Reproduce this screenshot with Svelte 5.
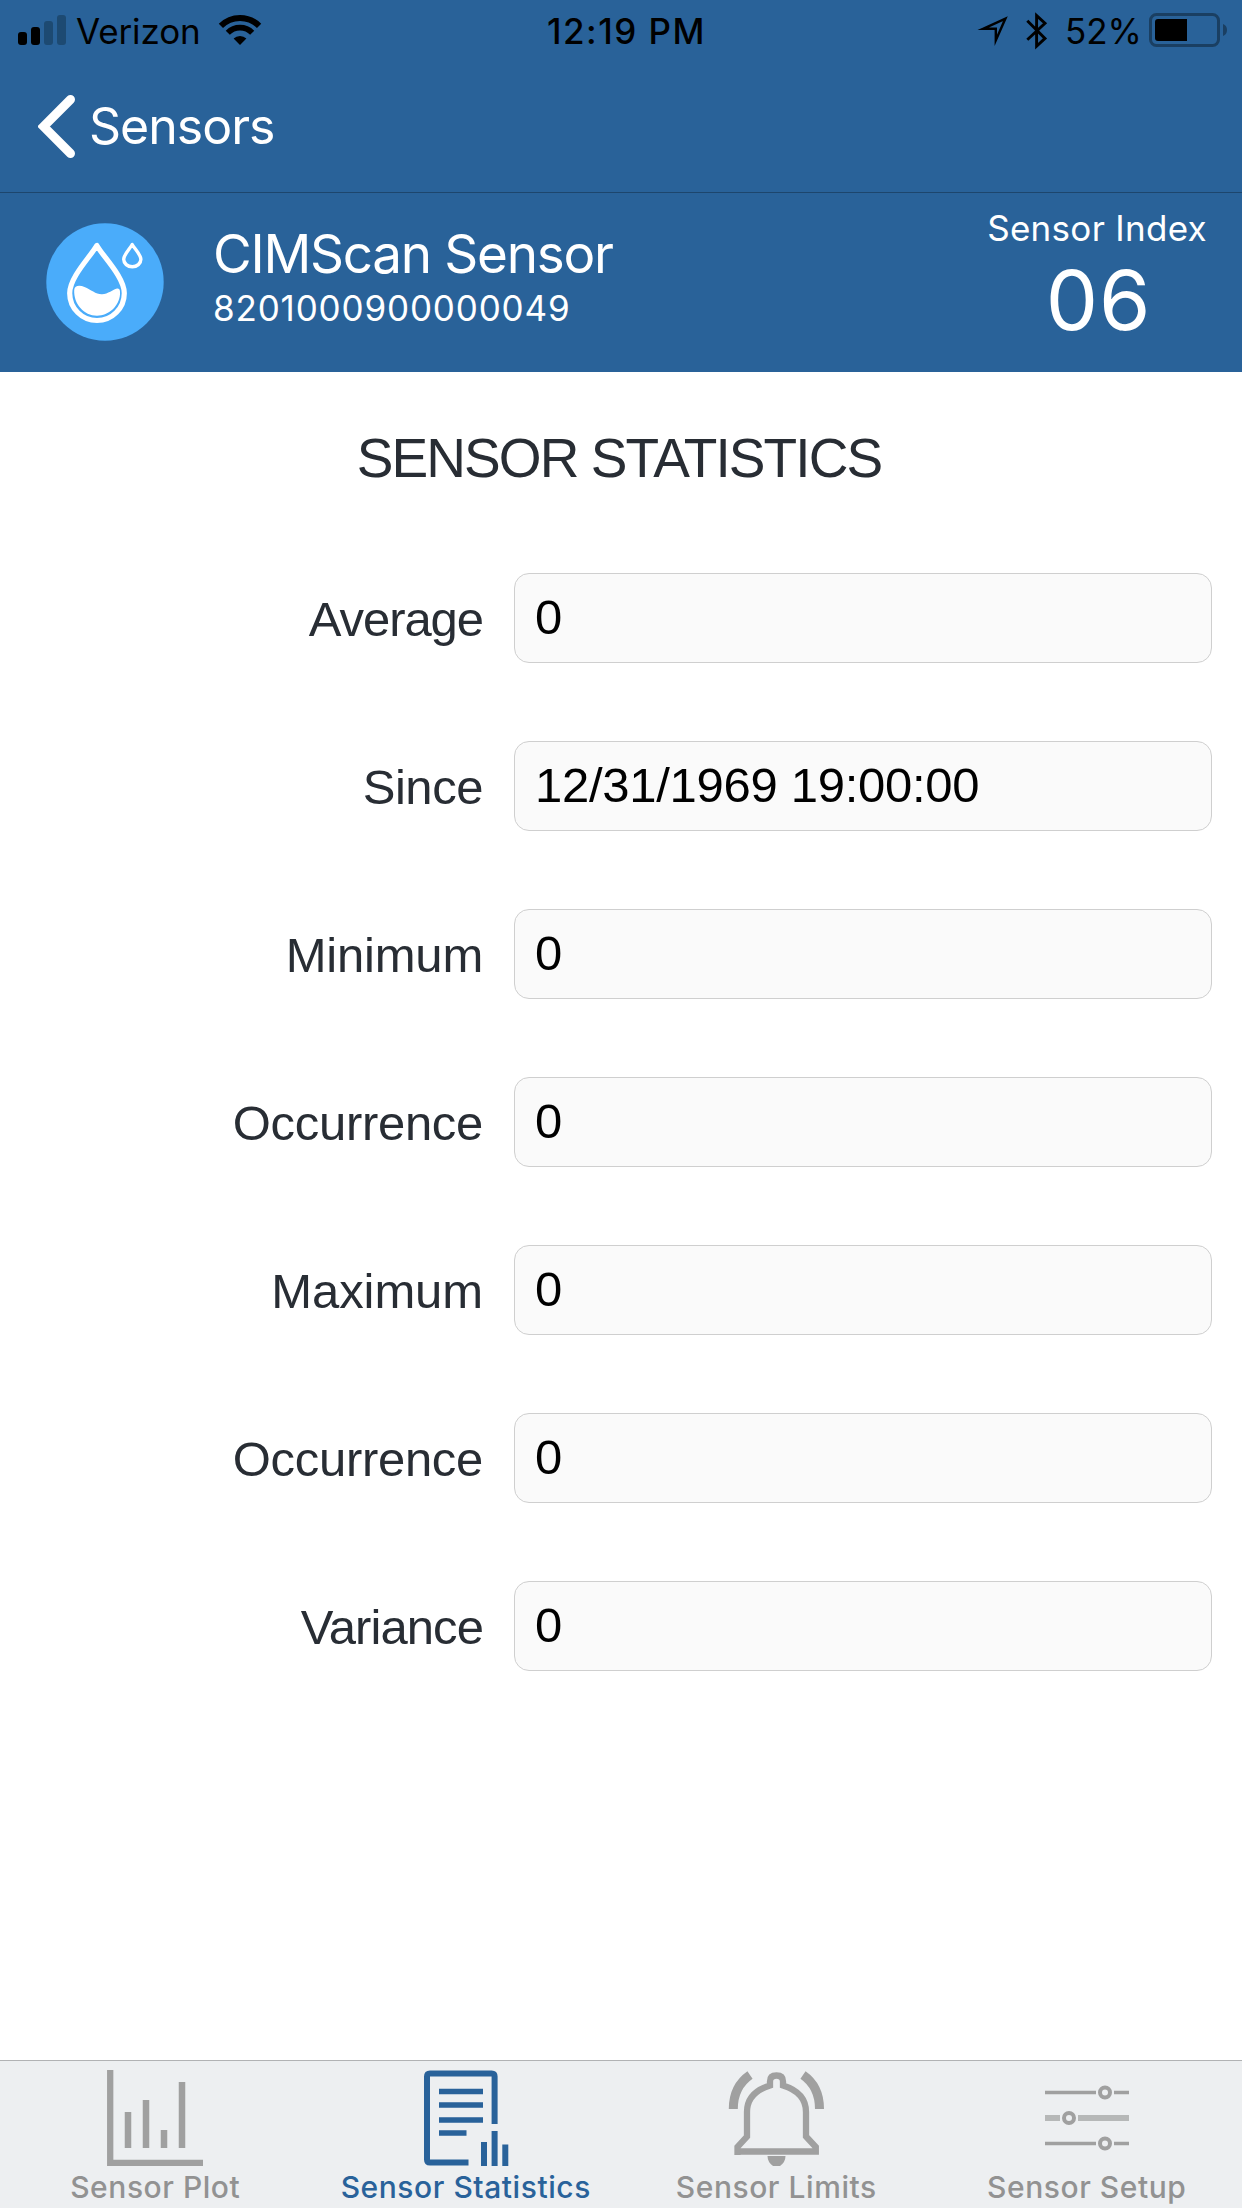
<script>
  const fields = [
    { label: 'Average', value: '0', tracking: -1.06 },
    { label: 'Since', value: '12/31/1969 19:00:00', tracking: -0.46 },
    { label: 'Minimum', value: '0', tracking: -0.2 },
    { label: 'Occurrence', value: '0', tracking: -0.3 },
    { label: 'Maximum', value: '0', tracking: -0.1 },
    { label: 'Occurrence', value: '0', tracking: -0.3 },
    { label: 'Variance', value: '0', tracking: -0.93 }
  ];

  const tabs = [
    { id: 'plot', label: 'Sensor Plot' },
    { id: 'stats', label: 'Sensor Statistics' },
    { id: 'limits', label: 'Sensor Limits' },
    { id: 'setup', label: 'Sensor Setup' }
  ];

  const active = 'stats';
</script>

<div class="screen">
  <header>
    <div class="status">
      <div class="carrier">
        <svg width="67" height="60" viewBox="0 0 67 60">
          <rect x="18" y="32" width="9" height="13" rx="3" />
          <rect x="31" y="27" width="9" height="18" rx="3" />
          <rect class="dim" x="44" y="21" width="9" height="24" rx="3" />
          <rect class="dim" x="57" y="15" width="9" height="30" rx="3" />
        </svg>
        <span>Verizon</span>
        <svg width="44" height="60" viewBox="218 0 44 60">
          <path class="line" stroke-width="6" d="M220.9 25.9A27 27 0 0 1 259.1 25.9" />
          <path class="line" stroke-width="5.8" d="M227.8 32.8A17.2 17.2 0 0 1 252.2 32.8" />
          <path d="M240 45L233.6 38.6A9 9 0 0 1 246.4 38.6Z" />
        </svg>
      </div>
      <span class="clock">12:19 PM</span>
      <div class="power">
        <svg width="32" height="60" viewBox="977 0 32 60">
          <path class="line" stroke-width="2.4" stroke-miterlimit="10" d="M983 28.8L1005.4 18.6L995.8 40.4V28.8Z" />
        </svg>
        <svg class="bluetooth" width="22" height="60" viewBox="1026 0 22 60">
          <path class="line" stroke-width="2.9" d="M1027.3 20.8L1045 38.4L1036.6 46.2V15.6L1045 23.2L1027.3 39.8" />
        </svg>
        <span>52%</span>
        <svg width="79" height="60" viewBox="1149 0 79 60">
          <rect class="case" x="1150.5" y="14.5" width="68" height="31" rx="6" />
          <path d="M1158 19H1187V41H1158Q1155 41 1155 38V22Q1155 19 1158 19Z" />
          <path class="nub" d="M1223 24Q1227 25.500 1227 30T1223 36Z" />
        </svg>
      </div>
    </div>

    <nav>
      <svg width="38" height="64" viewBox="38 94 38 64">
        <path d="M70.500 99.500L43.500 126.500L70.500 153.500" />
      </svg>
      <span>Sensors</span>
    </nav>

    <section class="sensor">
      <svg class="badge" width="118" height="118" viewBox="46 223 118 118">
        <circle cx="105" cy="282" r="58.700" fill="#4aacfa" />
        <path class="outline" stroke-width="5.200" d="M96.800 245.500C91 256 69.700 277 69.700 293.200A27.300 27.300 0 0 0 124.300 293.200C124.300 277 102.600 256 96.800 245.500Z" />
        <path fill="#fff" d="M74.200 290C74.500 285 80 285 84.500 287C91 289.500 96 294.500 102 294.300C108 294 113 289.500 117 288.500C120 288 120.300 291 120 294.500C119 306 109 315.700 97 315.700C84 315.700 73.500 304 74.200 290Z" />
        <path class="outline" stroke-width="3.400" d="M132.200 244.500C130 248.500 123.700 254.500 123.700 259.300A8.600 7.500 0 0 0 140.900 259.300C140.900 254.500 134.400 248.500 132.200 244.500Z" />
      </svg>
      <div class="identity">
        <h1>CIMScan Sensor</h1>
        <p>8201000900000049</p>
      </div>
      <div class="index">
        <span>Sensor Index</span>
        <strong>06</strong>
      </div>
    </section>
  </header>

  <main>
    <h2>SENSOR STATISTICS</h2>
    <div class="fields">
      {#each fields as field}
        <div class="field">
          <span class="label" style:letter-spacing="{field.tracking}px">{field.label}</span>
          <div class="value">{field.value}</div>
        </div>
      {/each}
    </div>
  </main>

  <footer>
    {#each tabs as tab}
      <div class="tab" class:active={tab.id === active}>
        <svg width="96" height="96" viewBox="0 0 96 96">
          {#if tab.id === 'plot'}
            <path stroke-width="6.300" d="M3.200 0V92.800H96" />
            <path stroke-width="6.500" d="M21 42V78M39 30V78M57 60V78M75 12V78" />
          {:else if tab.id === 'stats'}
            <path stroke-width="6" stroke-linejoin="round" d="M50.500 92.500H12Q9 92.500 9 89.500V6.500Q9 3.500 12 3.500H73.600Q76.600 3.500 76.600 6.500V54" />
            <path stroke-width="5.500" d="M21 21.500H65M21 35H65M21 50H65M21 63H48.500" />
            <path stroke-width="6" d="M66 72V96M76.600 61V96M87.300 74.500V96" />
          {:else if tab.id === 'limits'}
            <path stroke-width="6.300" d="M9.500 85V77L19 66.500V42C19 29 27.500 20 42 15.500V11.500Q42 5.500 48.500 5.500T55 11.500V15.500C69.500 20 78 29 78 42V66.500L87.800 77V81.500H9.500" />
            <path stroke-width="9" d="M5.300 39C5.300 24 10.500 13 22 5M91.500 39C91.500 24 86.500 13 75 5" />
            <path class="solid" d="M39.500 86H57.500Q57.500 92 52 96H45Q39.500 92 39.500 86Z" />
          {:else}
            <path stroke-width="3.500" d="M6 22.500H57M75 22.500H90M6 73.500H57M75 73.500H90" />
            <path class="soft" stroke-width="6" d="M6 48H21M39 48H90" />
            <g stroke-width="4">
              <circle cx="66" cy="22.500" r="5" />
              <circle cx="30" cy="48" r="5" />
              <circle cx="66" cy="73.500" r="5" />
            </g>
          {/if}
        </svg>
        <span>{tab.label}</span>
      </div>
    {/each}
  </footer>
</div>

<style>
  :global(body) {
    background: #fff;
  }

  svg {
    display: block;
    flex: none;
  }

  h1,
  h2,
  p {
    margin: 0;
    font-weight: 400;
  }

  .screen {
    display: flex;
    flex-direction: column;
    width: 1242px;
    height: 2208px;
    overflow: hidden;
    background: #fff;
    font-family: Inter, 'Liberation Sans', sans-serif;
    white-space: nowrap;
  }

  header {
    height: 372px;
    background: #296299;
    color: #fff;
  }

  .status {
    display: grid;
    grid-template-columns: 547px 1fr auto;
    height: 60px;
    padding-right: 14px;
    color: #000;
    font-size: 35px;
    line-height: 63px;
  }

  .carrier,
  .power {
    display: flex;
  }

  .carrier span {
    margin: 0 17px 0 9px;
    letter-spacing: -0.13px;
  }

  .dim {
    fill: #1d4a72;
  }

  .line {
    fill: none;
    stroke: #000;
  }

  .clock {
    font-weight: 500;
    letter-spacing: 1.5px;
  }

  .bluetooth {
    margin: 0 17px;
  }

  .power span {
    margin-right: 7px;
  }

  .case {
    fill: none;
    stroke: #1a3f62;
    stroke-width: 3;
  }

  .nub {
    fill: #1a3f62;
  }

  nav {
    display: flex;
    align-items: center;
    height: 132px;
    padding-left: 38px;
    font-size: 50px;
    letter-spacing: -1px;
  }

  nav svg {
    margin-right: 13px;
  }

  nav path {
    fill: none;
    stroke: #fff;
    stroke-width: 9;
    stroke-linecap: round;
  }

  .sensor {
    display: flex;
    box-sizing: border-box;
    height: 180px;
    padding: 0 35px 0 46px;
    border-top: 1px solid #1d466d;
  }

  .badge {
    margin: 30px 49px 0 0;
  }

  .outline {
    fill: none;
    stroke: #fff;
    stroke-linejoin: round;
  }

  .identity {
    flex: 1;
    padding-top: 31px;
  }

  h1 {
    font-size: 53px;
    line-height: 60px;
    letter-spacing: -1.28px;
  }

  .identity p {
    margin-top: -1px;
    font-size: 35px;
    line-height: 50px;
    letter-spacing: 0.84px;
  }

  .index {
    display: flex;
    flex-direction: column;
    align-items: center;
    padding-top: 10px;
    font-size: 35px;
    line-height: 50px;
    letter-spacing: 0.3px;
  }

  .index strong {
    padding-left: 3px;
    font-size: 83px;
    font-weight: 400;
    line-height: 95px;
    letter-spacing: 0.8px;
  }

  main {
    flex: 1;
    padding-top: 51px;
    font-family: 'Liberation Sans', Arial, sans-serif;
    color: #282d34;
  }

  h2 {
    padding-right: 4px;
    font-size: 55px;
    line-height: 70px;
    letter-spacing: -1.93px;
    text-align: center;
  }

  .fields {
    display: grid;
    gap: 78px;
    padding: 80px 30px 0 0;
  }

  .field {
    display: grid;
    grid-template-columns: 483px 1fr;
    column-gap: 31px;
    height: 90px;
    font-size: 49px;
  }

  .label {
    line-height: 92px;
    text-align: right;
  }

  .value {
    box-sizing: border-box;
    height: 90px;
    padding-left: 20px;
    border: 1px solid #cfcfcf;
    border-radius: 15px;
    background: #fafafa;
    color: #000;
    line-height: 86px;
    letter-spacing: -0.28px;
  }

  footer {
    display: grid;
    grid-template-columns: repeat(4, 1fr);
    box-sizing: border-box;
    height: 148px;
    padding-top: 9px;
    border-top: 1px solid #b1b2b4;
    background: #edeff1;
  }

  .tab {
    display: flex;
    flex-direction: column;
    align-items: center;
    gap: 1px;
    color: #929292;
    font-size: 30px;
    font-weight: 500;
    line-height: 40px;
    letter-spacing: 0.55px;
  }

  .tab svg {
    fill: none;
    stroke: #a0a0a0;
  }

  .tab .soft {
    stroke: #b6b8b8;
  }

  .tab .solid {
    fill: #a0a0a0;
    stroke: none;
  }

  .tab.active {
    color: #29629a;
  }

  .tab.active svg {
    stroke: #29629a;
  }
</style>
